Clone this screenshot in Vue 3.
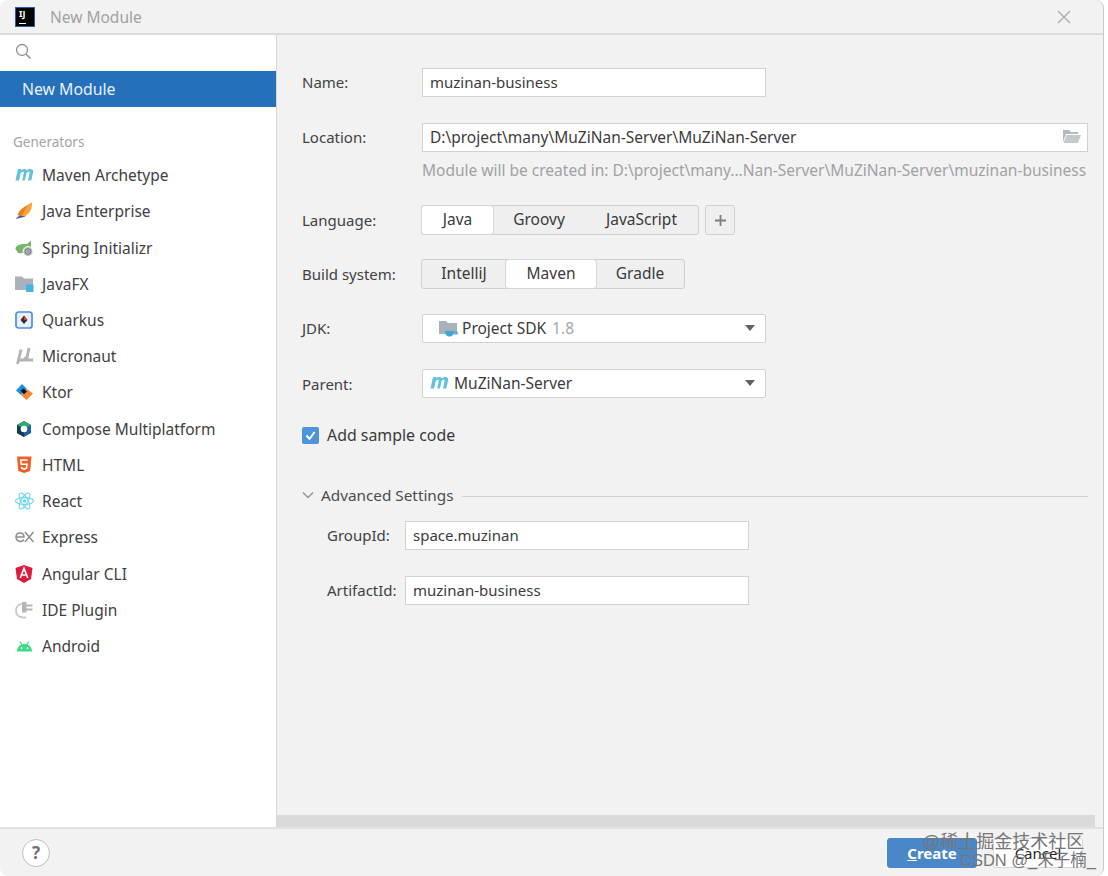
<script setup>
const mvn = '<path d="M0.500 14.500 L3 3 L6.300 3 L6.100 4.500 C8 2.600 11 2.500 11.600 4.500 C13.600 2.500 18.600 2.300 18.200 5.800 L16.300 14.500 H13 L14.600 7 C14.800 5.400 12.700 5.600 11.500 7 L9.900 14.500 H7.300 L8.800 7 C9 5.400 6.900 5.600 5.700 7 L4 14.500 Z" fill="#62c1dc"/>'

const generators = [
  { name: 'Maven Archetype', icon: mvn },
  { name: 'Java Enterprise', icon: '<path d="M5 13.500 C4.500 8.500 9.500 4 17 0.500 C17.500 6 15 11.500 9.500 14.500 Z" fill="#f6a53c"/><path d="M2.500 13 C4 8.500 8 5.500 12 3.500 C10 7.500 8.500 11 6.500 14 Z" fill="#ee7b22"/><path d="M0.500 17 L4.500 13.500 L11 14.500 Z" fill="#4d55a8"/>' },
  { name: 'Spring Initializr', icon: '<path d="M0.500 10 C0.500 6 6 4.500 12 5 L16 1.500 L16 8 C13 13.500 7 15 3 14 Z" fill="#78b36a"/><circle cx="13" cy="12.500" r="5" fill="#b9bec2" stroke="#fff"/><circle cx="13" cy="12.500" r="2.800" fill="none" stroke="#72777b" stroke-width="1"/><path d="M13 11 V13 H14.500" fill="none" stroke="#72777b" stroke-width=".8"/>' },
  { name: 'JavaFX', icon: '<path d="M0 1.500 H7 L9 3.500 H18 V15 H0 Z" fill="#a9b2ba"/><rect x="11" y="9.500" width="7.500" height="7.500" fill="#43b4e0"/>' },
  { name: 'Quarkus', icon: '<rect x="1" y="1" width="16" height="16" rx="2.500" fill="#e8f1fb" stroke="#4b8fdc" stroke-width="1.700"/><path d="M9 4.500 L12.500 9 L9 13 L5.500 9 Z" fill="#2e2e3a"/><path d="M9 4.500 L12.500 9 H9 Z" fill="#e2362f"/>' },
  { name: 'Micronaut', icon: '<path d="M6 2.500 L2.500 17 M14 1 L11.500 13 H18 M4.500 12.500 C7 14 9.500 13 11.800 10" fill="none" stroke="#b3b6b9" stroke-width="3"/>' },
  { name: 'Ktor', icon: '<path d="M1 7.500 L7 1 L12 6 L6 12 Z" fill="#1c8dea"/><path d="M6 12 L12 6 L18 10.500 L11.500 17 Z" fill="#f08a3c"/><path d="M5.500 7.500 L8.500 5.500 L12 8.500 L9 11.300 Z" fill="#111"/>' },
  { name: 'Compose Multiplatform', icon: '<path d="M9 1 L16 5 V13 L9 17 L2 13 V5 Z" fill="#1f5fa8"/><path d="M9 1 L16 5 L9 9 L2 5 Z" fill="#2fa96c"/><path d="M2 5 L9 9 V17 L2 13 Z" fill="#173b4a"/><circle cx="9" cy="9" r="3.300" fill="#fff"/>' },
  { name: 'HTML', icon: '<path d="M2 0.500 H16.500 L15.200 15 L9.200 17 L3.300 15 Z" fill="#e9602c"/><path d="M12.500 4 H5.800 L6.200 8.200 H12 L11.500 12.200 L9.200 13.200 L6.800 12.200 L6.600 10.800" fill="none" stroke="#fff" stroke-width="1.500"/>' },
  { name: 'React', icon: '<g fill="none" stroke="#6fd6f2" stroke-width="1.100"><ellipse cx="9.500" cy="9" rx="9" ry="3.400"/><ellipse cx="9.500" cy="9" rx="9" ry="3.400" transform="rotate(60 9.500 9)"/><ellipse cx="9.500" cy="9" rx="9" ry="3.400" transform="rotate(120 9.500 9)"/></g><circle cx="9.500" cy="9" r="1.800" fill="#6fd6f2"/>' },
  { name: 'Express', icon: '<path d="M1 9 H9 C9 3.800 1 3.800 1 9 C1 14 7 14.500 9 11.500 M10 4 L18.500 14 M18.500 4 L10 14" fill="none" stroke="#8b8e91" stroke-width="1.500"/>' },
  { name: 'Angular CLI', icon: '<path d="M9 0 L17.500 3 L16 14 L9 18 L2 14 L0.500 3 Z" fill="#dd1b3b"/><path d="M5.200 13 L9 3.500 L12.800 13 M6.500 10 H11.500" fill="none" stroke="#fff" stroke-width="1.700"/>' },
  { name: 'IDE Plugin', icon: '<path d="M7 2.500 C3 3.500 1 6 1 9.500 C1 14 4 16.500 9 16.500 H11" fill="none" stroke="#c6c9cc" stroke-width="1.800"/><path d="M7 1 H11.500 V3.500 H17.500 V5.500 H11.500 V7.500 H17.500 V9.500 H11.500 V11.500 H7 Z" fill="#b4b7ba"/>' },
  { name: 'Android', icon: '<path d="M2 14.500 C2 9.500 5.500 7 9.500 7 C13.500 7 17 9.500 17 14.500 Z" fill="#3ddc84"/><path d="M5 4.500 L7 7.500 M14 4.500 L12 7.500" stroke="#3ddc84" stroke-width="1.300"/><circle cx="6.500" cy="11" r=".9" fill="#fff"/><circle cx="12.500" cy="11" r=".9" fill="#fff"/>' }
]
</script>

<template>
  <div class="page">
    <div class="window">
      <header class="title-bar">
        <div class="ij-logo"><span>IJ</span><i></i></div>
        <span class="title">New Module</span>
        <svg class="close" width="16" height="16" viewBox="0 0 16 16">
          <path d="M2 2 L14 14 M14 2 L2 14" stroke="#a6a8aa" stroke-width="1.200" />
        </svg>
      </header>

      <div class="body">
        <aside class="sidebar">
          <div class="search">
            <svg width="18" height="18" viewBox="0 0 18 18" fill="none">
              <circle cx="7" cy="7" r="5.500" stroke="#8e9193" stroke-width="1.300" />
              <path d="M11 11 L15.500 15.500" stroke="#8e9193" stroke-width="1.500" />
            </svg>
          </div>
          <div class="selected">New Module</div>
          <div class="group-title">Generators</div>
          <ul class="generators">
            <li v-for="g in generators" :key="g.name">
              <svg class="gen-icon" width="19" height="18" viewBox="0 0 19 18" v-html="g.icon"></svg>
              <span>{{ g.name }}</span>
            </li>
          </ul>
        </aside>

        <main class="panel">
          <div class="form">
            <div class="row name-row">
              <label>Name:</label>
              <div class="input short">muzinan-business</div>
            </div>

            <div class="row location-row">
              <label>Location:</label>
              <div class="input wide">
                <span class="path">D:\project\many\MuZiNan-Server\MuZiNan-Server</span>
                <svg width="19" height="16" viewBox="0 0 19 16">
                  <path d="M1 1 H7 L9 3 H16 V5 H4 L1 13 Z" fill="#b4babd" />
                  <path d="M4.500 6 H19 L16 14 H1.500 Z" fill="#c5cacd" />
                </svg>
              </div>
            </div>
            <div class="hint">Module will be created in: D:\project\many...Nan-Server\MuZiNan-Server\muzinan-business</div>

            <div class="row language-row">
              <label>Language:</label>
              <div class="segments">
                <span class="seg active lang-java">Java</span>
                <span class="seg lang-groovy">Groovy</span>
                <span class="seg lang-js">JavaScript</span>
              </div>
              <div class="plus">
                <svg width="13" height="13" viewBox="0 0 13 13">
                  <path d="M6.500 1 V12 M1 6.500 H12" stroke="#7d8083" stroke-width="1.800" />
                </svg>
              </div>
            </div>

            <div class="row build-row">
              <label>Build system:</label>
              <div class="segments">
                <span class="seg build-ij">IntelliJ</span>
                <span class="seg active build-mvn">Maven</span>
                <span class="seg build-gradle">Gradle</span>
              </div>
            </div>

            <div class="row jdk-row">
              <label>JDK:</label>
              <div class="input short select">
                <svg class="sdk-icon" width="20" height="19" viewBox="0 0 20 19">
                  <path d="M0 2 H7 L9 4 H18 V15 H0 Z" fill="#a9b2ba" />
                  <path d="M6 12 H15 C15 16 13 17.500 10.500 17.500 C8 17.500 6 16 6 12 Z" fill="#3fa6d6" />
                  <path d="M15 13 H18 V15 H15" fill="none" stroke="#3fa6d6" stroke-width="1.200" />
                </svg>
                <span>Project SDK <em>1.8</em></span>
                <i class="caret"></i>
              </div>
            </div>

            <div class="row parent-row">
              <label>Parent:</label>
              <div class="input short select">
                <svg class="mvn-icon" width="19" height="18" viewBox="0 0 19 18" v-html="mvn"></svg>
                <span>MuZiNan-Server</span>
                <i class="caret"></i>
              </div>
            </div>

            <div class="check-row">
              <div class="checkbox">
                <svg width="13" height="13" viewBox="0 0 13 13" fill="none">
                  <path d="M2.500 6.500 L5.500 10 L10.500 3" stroke="#fff" stroke-width="2" />
                </svg>
              </div>
              <span>Add sample code</span>
            </div>

            <div class="advanced">
              <svg width="12" height="8" viewBox="0 0 12 8" fill="none">
                <path d="M1 1.500 L6 6.500 L11 1.500" stroke="#8f9295" stroke-width="1.300" />
              </svg>
              <span>Advanced Settings</span>
              <div class="rule"></div>
            </div>

            <div class="row sub group-row">
              <label>GroupId:</label>
              <div class="input short">space.muzinan</div>
            </div>
            <div class="row sub artifact-row">
              <label>ArtifactId:</label>
              <div class="input short">muzinan-business</div>
            </div>
          </div>
          <div class="scrollbar"></div>
        </main>
      </div>

      <footer class="footer">
        <div class="help">?</div>
        <div class="actions">
          <button class="btn primary"><u>C</u>reate</button>
          <button class="btn">Cancel</button>
          <div class="watermark">
            <div>@稀土掘金技术社区</div>
            <div class="csdn">CSDN @_禾子楠_</div>
          </div>
        </div>
      </footer>
    </div>
  </div>
</template>

<style scoped>
.page {
  width: 1108px;
  height: 876px;
  background: #fff;
}
.window {
  width: 1104px;
  height: 876px;
  display: flex;
  flex-direction: column;
  background: #f2f2f2;
  border-right: 1px solid #c9c9c9;
  border-radius: 8px;
  overflow: hidden;
  box-sizing: border-box;
  font-family: "Noto Sans", "Open Sans", sans-serif;
  font-size: 15px;
  color: #3a3a3a;
}
.title-bar {
  height: 35px;
  flex: none;
  box-sizing: border-box;
  border-bottom: 2px solid #dcdcdc;
  display: flex;
  align-items: center;
  padding: 0 31px 0 15px;
}
.ij-logo {
  width: 20px;
  height: 20px;
  background: #000;
  box-sizing: border-box;
  border: 1px solid #2a5fa8;
  color: #fff;
  font-size: 9px;
  font-weight: 700;
  line-height: 11px;
  padding-left: 3px;
  position: relative;
}
.ij-logo i {
  position: absolute;
  left: 3px;
  bottom: 2px;
  width: 7px;
  height: 1px;
  background: #fff;
}
.title {
  margin-left: 15px;
  color: #a0a2a4;
  font-size: 15.500px;
}
.close {
  margin-left: auto;
}
.body {
  flex: 1;
  display: flex;
  min-height: 0;
}
.sidebar {
  width: 277px;
  flex: none;
  box-sizing: border-box;
  background: #fff;
  border-right: 1px solid #d6d6d6;
}
.search {
  height: 36px;
  box-sizing: border-box;
  padding: 8px 0 0 15px;
}
.selected {
  height: 36px;
  background: #2470b9;
  color: #e8f1f8;
  line-height: 36px;
  padding-left: 22px;
  font-size: 15.800px;
}
.group-title {
  margin-top: 25px;
  padding-left: 13px;
  height: 20px;
  line-height: 20px;
  color: #a2a4a6;
  font-size: 13.500px;
}
.generators {
  list-style: none;
  margin: 5px 0 0;
  padding: 0;
}
.generators li {
  height: 36.230px;
  display: flex;
  align-items: center;
  padding-left: 15px;
  color: #3f4143;
  font-size: 15.500px;
}
.gen-icon {
  flex: none;
  margin-right: 8px;
}
.panel {
  flex: 1;
  display: flex;
  flex-direction: column;
  min-width: 0;
}
.form {
  flex: 1;
  padding: 33px 15px 0 25px;
}
.row {
  display: flex;
  align-items: center;
  height: 29px;
}
.row label {
  width: 120px;
  flex: none;
  color: #3f4143;
  margin-top: -2px;
}
.input {
  box-sizing: border-box;
  height: 29px;
  background: #fff;
  border: 1px solid #d2d2d2;
  line-height: 26px;
  padding: 0 7px 1px;
  color: #3c3c3c;
  display: flex;
  align-items: center;
  flex: none;
}
.input.short {
  width: 344px;
}
.input.wide {
  flex: 1;
  justify-content: space-between;
  padding-right: 6px;
}
.path {
  font-size: 15.500px;
}
.location-row {
  margin-top: 26px;
}
.hint {
  margin: 7px 0 0 120px;
  height: 22px;
  line-height: 22px;
  color: #a0a2a4;
  white-space: nowrap;
  font-size: 15.500px;
}
.language-row {
  margin-top: 24px;
  height: 30px;
}
.build-row {
  margin-top: 24px;
  height: 30px;
}
.language-row label,
.build-row label,
.parent-row label {
  margin-top: 0;
}
.segments {
  height: 30px;
  display: flex;
  box-sizing: border-box;
  border: 1px solid #cfcfcf;
  border-radius: 3px;
  background: #efefef;
  margin-left: -1px;
  font-size: 15.500px;
}
.seg {
  height: 28px;
  line-height: 27px;
  text-align: center;
  box-sizing: border-box;
}
.seg.active {
  background: #fff;
  border-radius: 3px;
  box-shadow: 0 0 0 1px #d6d6d6;
}
.lang-java { width: 71px; }
.lang-groovy { width: 92px; }
.lang-js { width: 113px; }
.build-ij { width: 84px; }
.build-mvn { width: 90px; }
.build-gradle { width: 88px; }
.plus {
  margin-left: 6px;
  width: 30px;
  height: 30px;
  box-sizing: border-box;
  border: 1px solid #cfcfcf;
  border-radius: 3px;
  background: #efefef;
  display: flex;
  align-items: center;
  justify-content: center;
}
.jdk-row {
  margin-top: 25px;
}
.parent-row {
  margin-top: 26px;
}
.select {
  position: relative;
  border-radius: 2px;
  font-size: 15.500px;
}
.sdk-icon {
  margin: 0 3px 0 9px;
}
.mvn-icon {
  margin-right: 5px;
}
.select em {
  font-style: normal;
  color: #a6a8aa;
  margin-left: 2px;
}
.caret {
  margin-left: auto;
  margin-right: 3px;
  width: 0;
  height: 0;
  border-left: 5px solid transparent;
  border-right: 5px solid transparent;
  border-top: 6px solid #5f6163;
}
.check-row {
  margin-top: 28px;
  display: flex;
  align-items: center;
  height: 18px;
  gap: 8px;
  font-size: 15.900px;
}
.checkbox {
  width: 17px;
  height: 17px;
  background: #4a95dc;
  border-radius: 2px;
  display: flex;
  align-items: center;
  justify-content: center;
}
.advanced {
  margin-top: 41px;
  height: 20px;
  display: flex;
  align-items: center;
  color: #4a4c4e;
  font-size: 15.300px;
}
.advanced svg {
  margin-right: 7px;
}
.rule {
  flex: 1;
  height: 1px;
  background: #d0d0d0;
  margin: 2px 0 0 8px;
}
.sub {
  padding-left: 25px;
}
.sub label {
  width: 78px;
}
.group-row {
  margin-top: 16px;
}
.artifact-row {
  margin-top: 26px;
}
.scrollbar {
  height: 12px;
  flex: none;
  background: #dadada;
  margin-right: 8px;
}
.footer {
  height: 49px;
  flex: none;
  box-sizing: border-box;
  border-top: 2px solid #e2e2e2;
  display: flex;
  align-items: center;
  justify-content: space-between;
  padding: 0 20px 0 22px;
}
.help {
  width: 28px;
  height: 28px;
  box-sizing: border-box;
  border: 1px solid #bdbdbd;
  border-radius: 50%;
  background: #fff;
  text-align: center;
  line-height: 26px;
  font-size: 17px;
  font-weight: 700;
  color: #707274;
}
.actions {
  display: flex;
  gap: 16px;
  position: relative;
}
.btn {
  width: 90px;
  height: 30px;
  box-sizing: border-box;
  border: 1px solid #d8d8d8;
  border-radius: 3px;
  background: #fff;
  font: inherit;
  color: #222;
  padding: 0;
}
.btn.primary {
  background: #4a87c9;
  border-color: #4a87c9;
  color: #fff;
  font-weight: 700;
}
.watermark {
  position: absolute;
  right: -11px;
  top: -5px;
  width: 172px;
  font-family: "Liberation Sans", "Noto Sans CJK SC", sans-serif;
  font-size: 18px;
  line-height: 19px;
  color: #767678;
  white-space: nowrap;
  pointer-events: none;
}
.csdn {
  margin-left: 38px;
  font-size: 16.500px;
  line-height: 17px;
}
</style>
